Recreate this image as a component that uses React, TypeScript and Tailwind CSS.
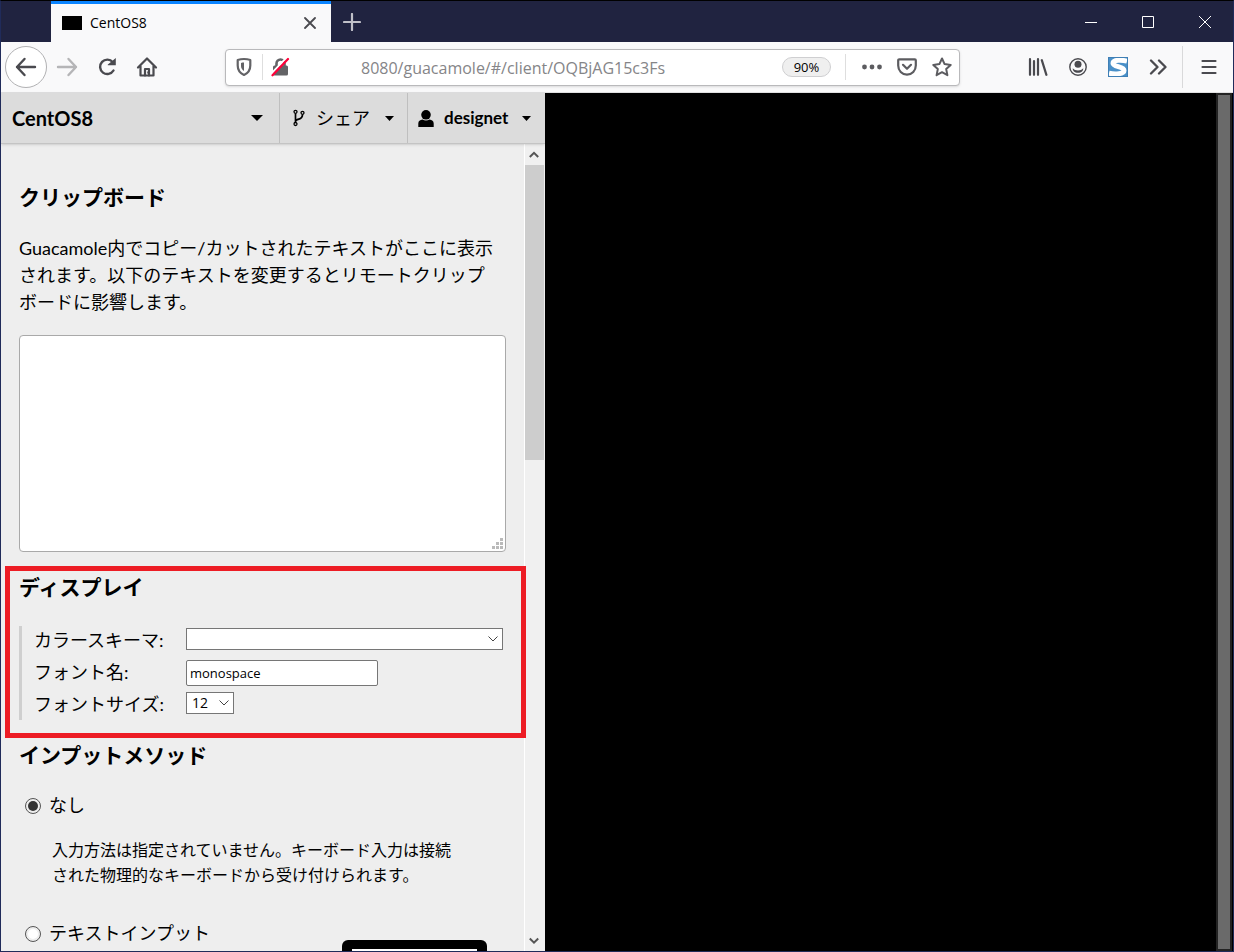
import { useState } from "react";
import type { ReactNode } from "react";

const UI_FONT = "font-['Open_Sans','Noto_Sans_CJK_JP',sans-serif]";
const PAGE_FONT = "font-['Lato','Noto_Sans_CJK_JP',sans-serif]";

export default function App() {
  return (
    <div className="flex h-screen flex-col overflow-hidden border border-[#202b5a] border-t-black bg-black text-black">
      <TitleBar />
      <Toolbar />
      <div className="flex min-h-0 flex-1">
        <GuacMenu />
        <main className="flex min-w-0 flex-1 justify-end bg-black pr-px">
          <div className="w-4 border-2 border-[#232323] bg-[#6a6a6a]" />
        </main>
      </div>
    </div>
  );
}

function TitleBar() {
  return (
    <header className={`flex h-[41px] shrink-0 bg-[#202340] ${UI_FONT}`}>
      <div className="ml-[50px] flex w-[280px] items-center border-t-3 border-[#0a84ff] bg-[#f9f9fa] px-[11px]">
        <span className="h-[14px] w-5 bg-black" />
        <span className="ml-2 flex-1 text-sm">CentOS8</span>
        <button aria-label="タブを閉じる" className="flex w-5 justify-center">
          <svg width="12" height="12" viewBox="0 0 12 12" stroke="#4a4a4f" strokeWidth="1.8" strokeLinecap="round">
            <path d="M1 1l10 10M11 1L1 11" />
          </svg>
        </button>
      </div>
      <button aria-label="新しいタブ" className="flex w-[42px] items-center justify-center">
        <svg width="18" height="18" viewBox="0 0 18 18" stroke="#c0c0c8" strokeWidth="2.2" strokeLinecap="round">
          <path d="M9 1v16M1 9h16" />
        </svg>
      </button>
      <div className="ml-auto flex">
        <WindowButton label="最小化">
          <path d="M0 6.5h12" />
        </WindowButton>
        <WindowButton label="最大化">
          <path d="M.5.5h11v11H.5z" />
        </WindowButton>
        <WindowButton label="閉じる">
          <path d="M0 0l12 12M12 0L0 12" />
        </WindowButton>
      </div>
    </header>
  );
}

function WindowButton({ label, children }: { label: string; children: ReactNode }) {
  return (
    <button aria-label={label} className="flex w-[57px] items-center justify-center">
      <svg width="12" height="12" viewBox="0 0 12 12" fill="none" stroke="#fff" className="overflow-visible">
        {children}
      </svg>
    </button>
  );
}

function ToolButton({ label, children }: { label: string; children: ReactNode }) {
  return (
    <button aria-label={label} className="flex h-10 w-10 shrink-0 items-center justify-center">
      {children}
    </button>
  );
}

function Toolbar() {
  const [url, setUrl] = useState("8080/guacamole/#/client/OQBjAG15c3Fs");

  return (
    <nav className={`flex h-[51px] shrink-0 items-center border-b border-[#e0e0e1] bg-[#f9f9fa] pr-1 pl-1 ${UI_FONT}`}>
      <button
        aria-label="戻る"
        className="flex h-[42px] w-[42px] shrink-0 items-center justify-center rounded-full border border-[#b1b1b3] bg-white"
      >
        <svg width="22" height="20" viewBox="0 0 22 20" fill="none" stroke="#4a4a4f" strokeWidth="2.4" strokeLinecap="round" strokeLinejoin="round">
          <path d="M20 10H2M9.500 2L2 10l7.500 8" />
        </svg>
      </button>
      <ToolButton label="進む">
        <svg width="22" height="20" viewBox="0 0 22 20" fill="none" stroke="#b5b5b7" strokeWidth="2.4" strokeLinecap="round" strokeLinejoin="round">
          <path d="M2 10h18M12.500 2L20 10l-7.500 8" />
        </svg>
      </ToolButton>
      <ToolButton label="再読み込み">
        <svg width="20" height="20" viewBox="0 0 20 20" fill="none" stroke="#4a4a4f" strokeWidth="2.4" strokeLinecap="round">
          <path d="M15.800 5.200A7.200 7.200 0 1 0 16.500 13.500" />
          <path d="M18.800 1v7.200h-7.600c-.5 0-.7-.5-.3-.8z" fill="#4a4a4f" stroke="none" />
        </svg>
      </ToolButton>
      <ToolButton label="ホーム">
        <svg width="22" height="22" viewBox="0 0 22 22" fill="none" stroke="#4a4a4f" strokeWidth="2.2" strokeLinecap="round" strokeLinejoin="round">
          <path d="M2 11.500L11 2.500l9 9M4.500 10v9.500h13V10" />
          <path d="M9 19.500v-6.500h4v6.500" />
          <path d="M12 16v1" strokeWidth="1.500" />
        </svg>
      </ToolButton>

      <div className="mx-[58px] flex h-[37px] min-w-0 flex-1 items-center rounded-sm border border-[#b9b9bb] bg-white shadow-sm">
        <button aria-label="トラッキング防止" className="flex w-9 justify-center">
          <svg width="18" height="20" viewBox="0 0 18 20" fill="none" stroke="#636366" strokeWidth="2.2" strokeLinejoin="round">
            <path d="M9 2c2.500 0 4.500.4 6.300 1v5.500c0 4.500-2.200 7.600-6.300 9.500-4.100-1.900-6.300-5-6.300-9.500V3C4.500 2.400 6.500 2 9 2z" />
            <path d="M9 5.500c-1.200 0-2 .1-3 .4v2.800c0 2.300 1 4.100 3 5.400z" fill="#636366" stroke="none" />
          </svg>
        </button>
        <span className="h-[26px] w-px bg-[#dedede]" />
        <button aria-label="安全でない接続" className="flex w-9 justify-center">
          <svg width="20" height="20" viewBox="0 0 20 20" fill="none">
            <path d="M5.500 10V6.500a4 4 0 0 1 8 0V10" stroke="#636366" strokeWidth="2.600" />
            <rect x="2" y="8.500" width="15" height="10" rx="1.500" fill="#636366" />
            <path d="M.2 16.800L15.500.8" stroke="#fff" strokeWidth="2" />
            <path d="M1.500 18.300L17 2" stroke="#ff0039" strokeWidth="2.200" strokeLinecap="round" />
          </svg>
        </button>
        <input
          aria-label="アドレス"
          value={url}
          onChange={(e) => setUrl(e.target.value)}
          className="ml-[62px] min-w-0 flex-1 pt-0.5 text-base text-[#858588] outline-none"
        />
        <button className="h-5 w-[49px] rounded-full border border-[#cfcfd1] bg-[#efefef] text-[13px] leading-[18px]">90%</button>
        <span className="ml-[14px] h-[26px] w-px bg-[#dedede]" />
        <button aria-label="ページ操作" className="ml-2 flex w-[35px] justify-center">
          <svg width="20" height="6" viewBox="0 0 20 6" fill="#5c5c60">
            <circle cx="2.500" cy="3" r="2.400" />
            <circle cx="10" cy="3" r="2.400" />
            <circle cx="17.500" cy="3" r="2.400" />
          </svg>
        </button>
        <button aria-label="Pocket に保存" className="flex w-[35px] justify-center">
          <svg width="20" height="18" viewBox="0 0 20 18" fill="none" stroke="#5c5c60" strokeWidth="2.200" strokeLinecap="round" strokeLinejoin="round">
            <path d="M2.200 1.300h15.600c.6 0 1 .4 1 1V7.500c0 5.200-3.800 9.200-8.800 9.200s-8.800-4-8.800-9.200V2.300c0-.6.4-1 1-1z" />
            <path d="M6 6.800l4 4 4-4" />
          </svg>
        </button>
        <button aria-label="ブックマーク" className="flex w-[35px] justify-center">
          <svg width="20" height="20" viewBox="0 0 20 20" fill="none" stroke="#5c5c60" strokeWidth="2" strokeLinejoin="round">
            <path d="M10 1.500l2.600 5.600 6.100.8-4.500 4.200 1.200 6.100-5.400-3-5.400 3 1.200-6.100L1.300 7.900l6.100-.8z" />
          </svg>
        </button>
      </div>

      <ToolButton label="ライブラリー">
        <svg width="20" height="18" viewBox="0 0 20 18" stroke="#4a4a4f" strokeWidth="2.200" strokeLinecap="round">
          <path d="M2 1.200v15.600M6 3.200v13.600M10 1.200v15.600M13.800 2.200l4.600 14.600" />
        </svg>
      </ToolButton>
      <ToolButton label="アカウント">
        <svg width="20" height="20" viewBox="0 0 20 20" fill="none">
          <circle cx="10" cy="10" r="8.200" stroke="#4a4a4f" strokeWidth="1.400" />
          <circle cx="10" cy="7.200" r="3.500" fill="#4a4a4f" />
          <path d="M4.800 11.200c1.300 1.500 3 2.200 5.200 2.200s3.900-.7 5.200-2.200c.3 2.500-1.700 4.600-5.200 4.600s-5.500-2.100-5.200-4.600z" fill="#4a4a4f" />
        </svg>
      </ToolButton>
      <ToolButton label="拡張機能">
        <svg width="20" height="20" viewBox="0 0 20 20" fill="none">
          <rect width="20" height="20" fill="#4a90c8" />
          <path d="M19 4.200C14 2.800 5 2.500 5 6.300c0 3.900 11 2.900 11 7.200 0 3.700-9 4-15 2.700" stroke="#fff" strokeWidth="5" />
          <rect x=".5" y=".5" width="19" height="19" stroke="#3f7fb5" />
        </svg>
      </ToolButton>
      <ToolButton label="その他のツール">
        <svg width="18" height="16" viewBox="0 0 18 16" fill="none" stroke="#4a4a4f" strokeWidth="2.300" strokeLinecap="round" strokeLinejoin="round">
          <path d="M2 1.500L8.500 8 2 14.500M10 1.500L16.500 8 10 14.500" />
        </svg>
      </ToolButton>
      <span className="mr-1.5 ml-1 h-[42px] w-px bg-[#d9d9da]" />
      <ToolButton label="メニュー">
        <svg width="16" height="16" viewBox="0 0 16 16" stroke="#4a4a4f" strokeWidth="2.200" strokeLinecap="round">
          <path d="M1.500 2h13M1.500 8h13M1.500 14h13" />
        </svg>
      </ToolButton>
    </nav>
  );
}

function Caret({ small = false }: { small?: boolean }) {
  return (
    <svg width={small ? 9 : 12} height={small ? 5 : 6} viewBox="0 0 12 6" preserveAspectRatio="none" className="shrink-0">
      <path d="M0 0h12L6 6z" />
    </svg>
  );
}

function GuacMenu() {
  return (
    <aside className={`flex w-[544px] shrink-0 flex-col bg-[#eee] ${PAGE_FONT}`}>
      <div className="z-10 flex h-[51px] shrink-0 border-b border-[#c4c4c4] bg-[#dcdcdc] shadow-sm">
        <button className="flex flex-1 items-center justify-between pr-4 pl-[11px] text-xl font-bold">
          CentOS8
          <Caret />
        </button>
        <button className="flex w-32 items-center border-l border-[#bfbfbf] pr-[13px] pl-3 text-lg">
          <svg width="14" height="18" viewBox="0 0 14 18" fill="none" stroke="#000" strokeWidth="1.300">
            <circle cx="3.500" cy="2.800" r="1.500" />
            <circle cx="3.500" cy="15" r="1.500" />
            <circle cx="10.500" cy="3.800" r="1.500" />
            <path d="M3.500 4.500v9M10.500 5.500c0 3-1.500 4-3.700 4.600-2 .5-3.300 1-3.300 2.500" strokeWidth="1.700" />
          </svg>
          <span className="mr-auto ml-[10px]">シェア</span>
          <Caret small />
        </button>
        <button className="flex w-[138px] items-center border-l border-[#bfbfbf] pr-[14px] pl-[10px] text-[17px] font-bold">
          <svg width="16" height="17" viewBox="0 0 16 17">
            <circle cx="8" cy="4.800" r="4.800" />
            <path d="M.3 17v-3.500C.3 11 2 10 4.500 9.600c2 1.300 5 1.300 7 0 2.500.4 4.200 1.400 4.200 3.900V17z" />
          </svg>
          <span className="mr-auto ml-[10px]">designet</span>
          <Caret small />
        </button>
      </div>

      <div className="flex min-h-0 flex-1 overflow-hidden">
        <div className="min-w-0 flex-1 pt-[39px] pr-[18px] pl-[18px]">
          <ClipboardSection />
          <DisplaySection />
          <InputMethodSection />
        </div>
        <ScrollBar />
      </div>
    </aside>
  );
}

function Heading({ children }: { children: ReactNode }) {
  return <h3 className="text-[21px] leading-7 font-bold">{children}</h3>;
}

function ClipboardSection() {
  const [text, setText] = useState("");

  return (
    <section>
      <Heading>クリップボード</Heading>
      <p className="mt-6 text-lg leading-[27px] whitespace-nowrap">
        Guacamole内でコピー/カットされたテキストがここに表示
        <br />
        されます。以下のテキストを変更するとリモートクリップ
        <br />
        ボードに影響します。
      </p>
      <div className="relative mt-[19px]">
        <textarea
          aria-label="クリップボード"
          value={text}
          onChange={(e) => setText(e.target.value)}
          className="block h-[217px] w-full resize-none rounded border border-[#a9a9a9] bg-white p-1"
        />
        <svg width="11" height="11" viewBox="0 0 11 11" fill="#bababa" className="absolute right-[3px] bottom-[3px]">
          <path d="M8 0h3v3H8zM4 4h3v3H4zM8 4h3v3H8zM0 8h3v3H0zM4 8h3v3H4zM8 8h3v3H8z" />
        </svg>
      </div>
    </section>
  );
}

function SelectBox({ id, className, options }: { id: string; className: string; options: string[] }) {
  return (
    <div className={`relative ${className}`}>
      <select
        id={id}
        className={`block h-[22px] w-full appearance-none border border-[#767676] bg-white pl-[5px] text-sm leading-5 ${UI_FONT}`}
      >
        {options.map((option) => (
          <option key={option}>{option}</option>
        ))}
      </select>
      <svg width="10" height="6" viewBox="0 0 10 6" fill="none" stroke="#444" className="pointer-events-none absolute top-2 right-[5px]">
        <path d="M.5.5L5 5 9.500.5" />
      </svg>
    </div>
  );
}

function DisplaySection() {
  const [fontName, setFontName] = useState("monospace");

  return (
    <section className="relative mt-[21px]">
      {/* Marco rojo de la anotación */}
      <div className="pointer-events-none absolute -top-[7px] -right-5 -bottom-[18px] -left-[14px] z-10 border-5 border-[#ed1c24]" />
      <Heading>ディスプレイ</Heading>
      <div className="mt-[25px] border-l-3 border-[#cfcfcf] pl-3 text-lg leading-7">
        <div className="flex h-8 items-start">
          <label htmlFor="color-scheme" className="w-[152px]">カラースキーマ:</label>
          <SelectBox id="color-scheme" className="mt-0.5 mr-[3px] flex-1" options={[""]} />
        </div>
        <div className="flex h-8 items-start">
          <label htmlFor="font-name" className="w-[152px]">フォント名:</label>
          <input
            id="font-name"
            value={fontName}
            onChange={(e) => setFontName(e.target.value)}
            className={`mt-0.5 h-[26px] w-48 rounded-xs border border-[#767676] bg-white px-[3px] text-[13px] ${UI_FONT}`}
          />
        </div>
        <div className="flex h-[30px] items-start">
          <label htmlFor="font-size" className="w-[152px]">フォントサイズ:</label>
          <SelectBox id="font-size" className="mt-0.5 w-12" options={["12", "8", "10", "14", "18", "24"]} />
        </div>
      </div>
    </section>
  );
}

function InputMethodSection() {
  const [method, setMethod] = useState("none");
  const radio =
    "ml-[6px] size-4 appearance-none rounded-full border border-[#555] bg-white bg-clip-content p-[2px] checked:bg-[#333]";

  return (
    <section className="mt-[21px]">
      <Heading>インプットメソッド</Heading>
      <div className="mt-[23px] flex items-center gap-2 text-lg leading-[27px]">
        <input id="ime-none" type="radio" name="ime" checked={method === "none"} onChange={() => setMethod("none")} className={radio} />
        <label htmlFor="ime-none">なし</label>
      </div>
      <p className="mt-[18px] ml-[33px] text-base leading-[25px]">
        入力方法は指定されていません。キーボード入力は接続
        <br />
        された物理的なキーボードから受け付けられます。
      </p>
      <div className="mt-[33px] flex items-center gap-2 text-lg leading-[27px]">
        <input id="ime-text" type="radio" name="ime" checked={method === "text"} onChange={() => setMethod("text")} className={radio} />
        <label htmlFor="ime-text">テキストインプット</label>
      </div>
      <div className="-mt-[7px] ml-[323px] h-24 w-[145px] rounded-md bg-black px-[10px] pt-[9px]">
        <div className="h-20 bg-white" />
      </div>
    </section>
  );
}

function ScrollBar() {
  return (
    <div className="flex w-[21px] shrink-0 flex-col border-l border-white bg-[#f0f0f0]">
      <svg width="10" height="21" viewBox="0 0 10 21" fill="none" stroke="#555" strokeWidth="2" className="ml-1">
        <path d="M.8 13L5 8.800 9.200 13" />
      </svg>
      <div className="h-[295px] w-[19px] bg-[#cdcdcd]" />
      <svg width="10" height="21" viewBox="0 0 10 21" fill="none" stroke="#555" strokeWidth="2" className="mt-auto ml-1">
        <path d="M.8 8.500L5 12.700 9.200 8.500" />
      </svg>
    </div>
  );
}
